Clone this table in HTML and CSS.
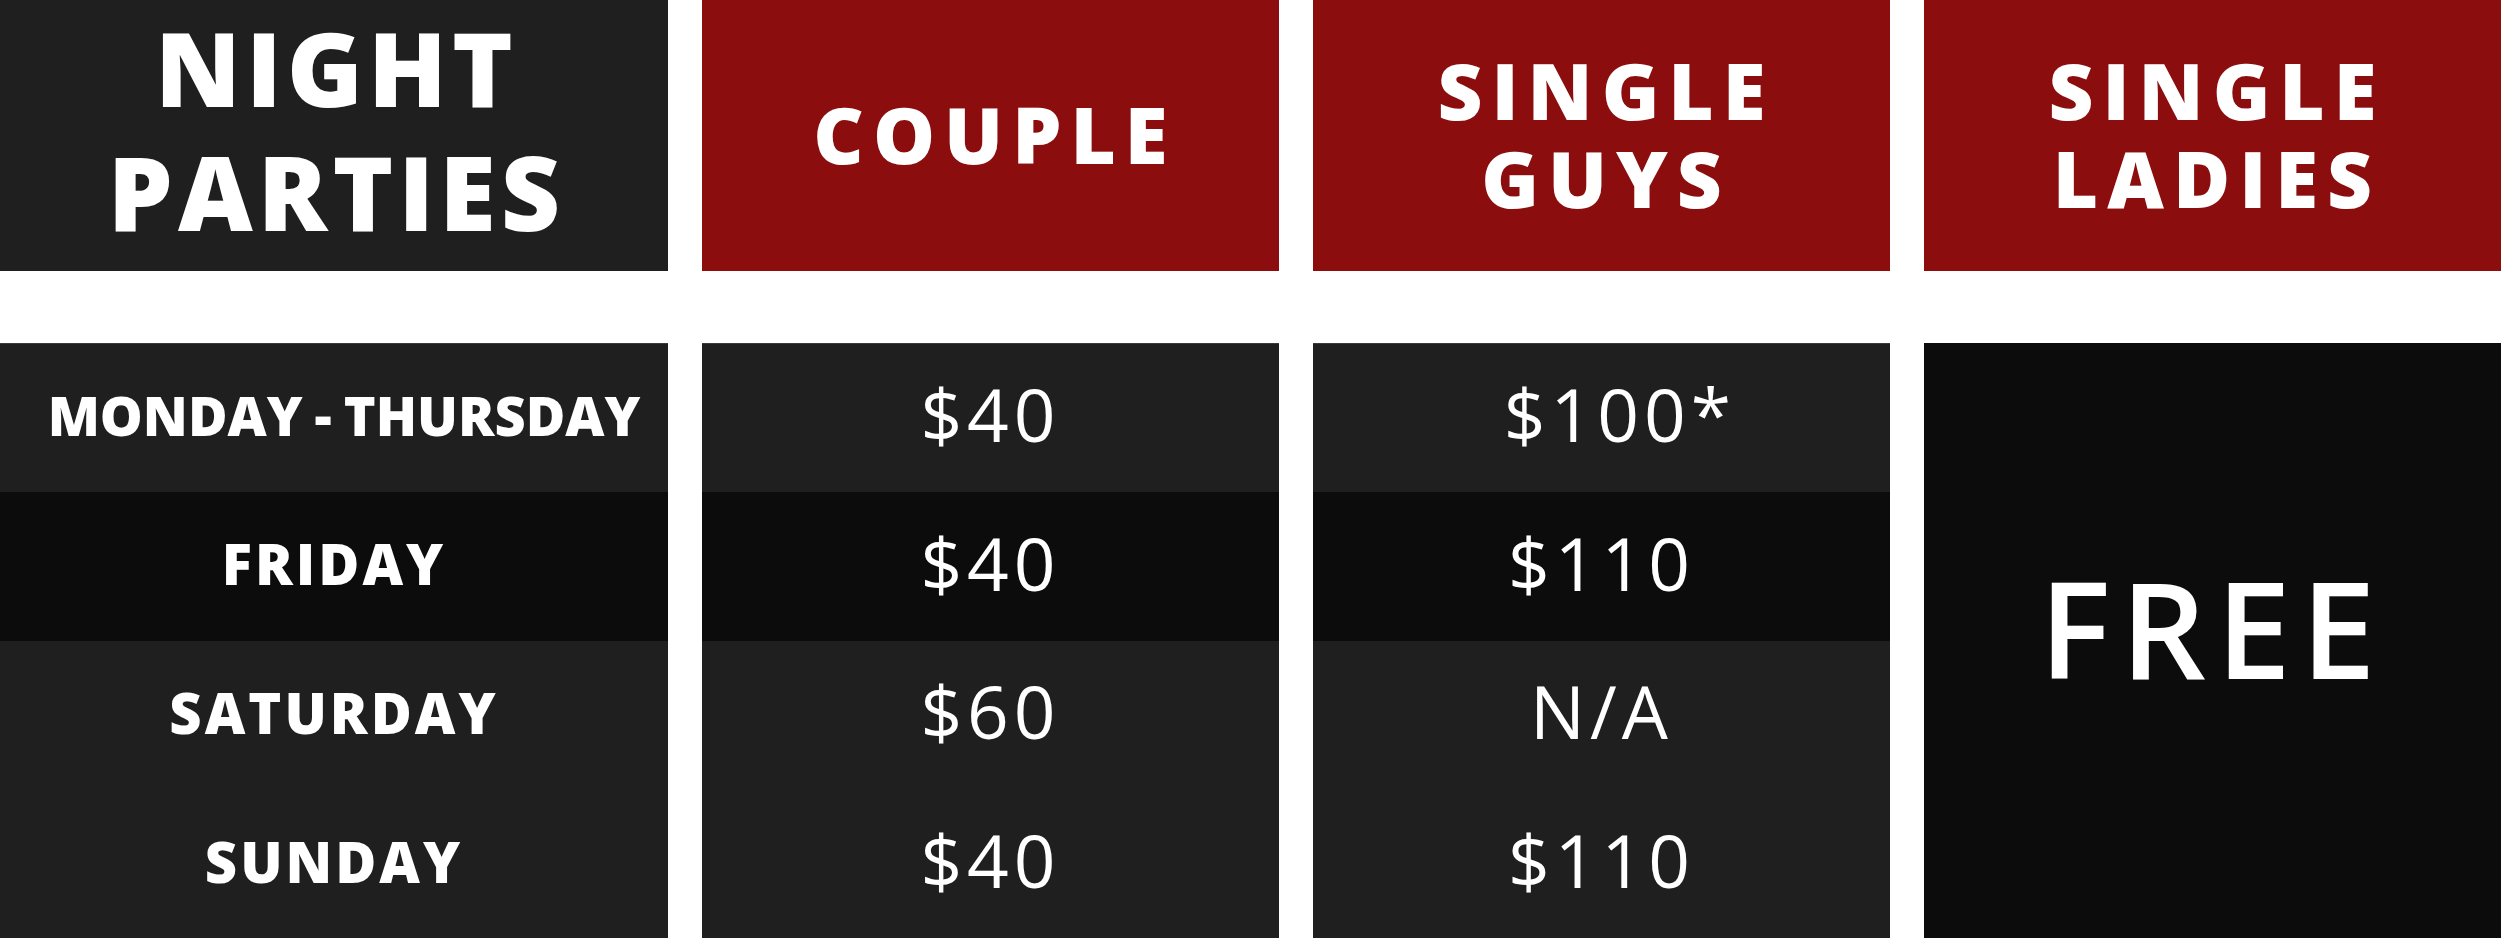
FILE: index.html
```html
<!DOCTYPE html>
<html lang="en">
<head>
<meta charset="utf-8">
<title>Night Parties Pricing</title>
<link rel="stylesheet" href="styles.css">
</head>
<body>
<div class="table">
  <div class="head">
    <div class="cell title"><div class="lines"><span>NIGHT</span><span>PARTIES</span></div></div>
    <div class="cell red"><div class="lines"><span>COUPLE</span></div></div>
    <div class="cell red"><div class="lines"><span>SINGLE</span><span>GUYS</span></div></div>
    <div class="cell red"><div class="lines"><span>SINGLE</span><span>LADIES</span></div></div>
  </div>
  <div class="body">
    <div class="cell day day-long r1">MONDAY - THURSDAY</div>
    <div class="cell price r1">$40</div>
    <div class="cell price r1">$100<span class="star">*</span></div>
    <div class="cell free">FREE</div>

    <div class="cell day r2 dark">FRIDAY</div>
    <div class="cell price r2 dark">$40</div>
    <div class="cell price r2 dark">$110</div>

    <div class="cell day r3">SATURDAY</div>
    <div class="cell price r3">$60</div>
    <div class="cell price r3">N/A</div>

    <div class="cell day r4">SUNDAY</div>
    <div class="cell price r4">$40</div>
    <div class="cell price r4">$110</div>
  </div>
</div>
</body>
</html>
```

FILE: styles.css
```css
html, body {
  margin: 0;
  padding: 0;
  background: #ffffff;
}

.table {
  width: 2501px;
  height: 938px;
  display: flex;
  flex-direction: column;
  font-family: "Open Sans", "DejaVu Sans", sans-serif;
  color: #ffffff;
}

.head,
.body {
  display: grid;
  grid-template-columns: 668px 577px 577px 1fr;
  column-gap: 34px;
}

.head {
  height: 271px;
  margin-bottom: 72px;
}

.body {
  height: 595px;
  grid-template-rows: repeat(4, 1fr);
}

.cell {
  display: flex;
  align-items: center;
  justify-content: center;
  text-align: center;
  background: #1f1f1f;
  box-sizing: border-box;
}

.lines {
  display: flex;
  flex-direction: column;
  align-items: center;
}

.lines span {
  display: block;
}

.title {
  font-weight: 800;
  font-size: 103px;
  letter-spacing: 5px;
  padding-bottom: 14px;
}

.title .lines span {
  line-height: 124px;
  margin-right: -5px;
}

.red {
  background: #8b0d0d;
  font-weight: 800;
  font-size: 78px;
  letter-spacing: 9px;
  padding-bottom: 4px;
}

.red .lines span {
  line-height: 88px;
  margin-right: -9px;
}

.body .r1 {
  border-top: 1px solid #3a3a3a;
}

.day {
  font-weight: 800;
  font-size: 56px;
  letter-spacing: 3px;
  grid-column: 1;
  padding-bottom: 6px;
}

.day-long {
  font-size: 54px;
  letter-spacing: 0;
  word-spacing: -2px;
  padding-left: 20px;
}

.price {
  font-weight: 400;
  font-size: 73px;
  letter-spacing: 5px;
  padding-bottom: 8px;
}

.r1 { grid-row: 1; }
.r2 { grid-row: 2; }
.r3 { grid-row: 3; }
.r4 { grid-row: 4; }

.dark {
  background: #0c0c0c;
}

.star {
  margin-right: -0.5em;
}

.free {
  grid-column: 4;
  grid-row: 1 / span 4;
  background: #0c0c0c;
  font-weight: 600;
  font-size: 134px;
  letter-spacing: 10px;
  padding-bottom: 28px;
}
```
